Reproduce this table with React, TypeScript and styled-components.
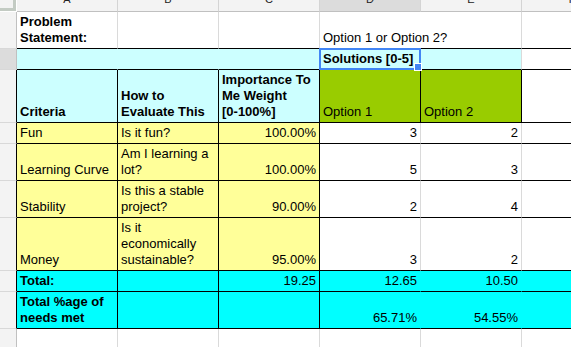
import React from 'react';
import styled, { createGlobalStyle } from 'styled-components';

const GRID = '#dadada';
const HEAD_LINE = '#c0c0c0';
const INK = '#000';
const PALE_CYAN = '#ccffff';
const YELLOW = '#ffff99';
const GREEN = '#99cc00';
const CYAN = '#00ffff';

const GlobalStyle = createGlobalStyle`
  html, body {
    margin: 0;
    padding: 0;
    background: #ffffff;
  }
`;

const Sheet = styled.div`
  width: 100vw;
  height: 100vh;
  overflow: hidden;
  background: #ffffff;
`;

const Grid = styled.div<{ $rows: string }>`
  display: grid;
  grid-template-columns: 17px repeat(6, 101px);
  grid-template-rows: ${p => p.$rows};
  font-family: 'Liberation Sans', Arial, sans-serif;
  font-size: 13px;
  line-height: 16px;
  color: #000;
`;

const Corner = styled.div`
  box-sizing: border-box;
  background: #f3f3f3;
  border-right: 3px solid #c3cbc3;
  border-bottom: 3px solid #c3cbc3;
  height: 11px;
  width: 16px;
`;

const ColumnHead = styled.div<{ $active?: boolean }>`
  box-sizing: border-box;
  display: flex;
  justify-content: center;
  align-items: flex-end;
  overflow: hidden;
  padding-bottom: 6px;
  background: ${p => (p.$active ? '#dcdcdc' : '#f3f3f3')};
  border-right: 1px solid #d4d4d4;
  border-bottom: 1px solid ${HEAD_LINE};
  font-size: 11px;
  line-height: 12px;
  color: #222;
`;

const RowHead = styled.div<{ $active?: boolean; $edge: string }>`
  box-sizing: border-box;
  background: ${p => (p.$active ? '#dcdcdc' : '#f3f3f3')};
  border-right: 1px solid ${p => p.$edge};
  border-bottom: 1px solid #d8d8d8;
`;

const Cell = styled.div<{
  $bg?: string;
  $bold?: boolean;
  $num?: boolean;
  $right: string;
  $bottom: string;
}>`
  box-sizing: border-box;
  display: flex;
  flex-direction: column;
  justify-content: flex-end;
  align-items: ${p => (p.$num ? 'flex-end' : 'flex-start')};
  padding: 0 3px 2px;
  overflow: hidden;
  background: ${p => p.$bg ?? 'transparent'};
  border-right: 1px solid ${p => p.$right};
  border-bottom: 1px solid ${p => p.$bottom};
  font-weight: ${p => (p.$bold ? 700 : 400)};
`;

// text that runs on into the empty neighbour cell
const SpillCell = styled(Cell)`
  overflow: visible;
  position: relative;
  z-index: 1;
`;

const Line = styled.span`
  display: block;
  white-space: nowrap;
`;

const Selection = styled.div`
  position: absolute;
  top: -1px;
  left: -1px;
  right: -1px;
  bottom: -1px;
  border: 2px solid #4285f4;
  pointer-events: none;
`;

const FillHandle = styled.div`
  position: absolute;
  right: -2px;
  bottom: -2px;
  width: 6px;
  height: 6px;
  background: #4285f4;
  box-shadow: 0 0 0 1px #ffffff;
`;

type CellSpec = {
  text?: string[];
  bg?: string;
  bold?: boolean;
  num?: boolean;
  right: string;
  spill?: boolean;
  selected?: boolean;
};

type RowSpec = {
  height: string;
  edge: string;
  active?: boolean;
  bottom: string;
  cells: CellSpec[];
};

const dataRow = (
  criteria: string,
  how: string[],
  weight: string,
  opt1: string,
  opt2: string
): RowSpec => ({
  height: `${16 * how.length + 5}px`,
  edge: INK,
  bottom: INK,
  cells: [
    { text: [criteria], bg: YELLOW, right: INK },
    { text: how, bg: YELLOW, right: INK },
    { text: [weight], bg: YELLOW, num: true, right: INK },
    { text: [opt1], num: true, right: GRID },
    { text: [opt2], num: true, right: GRID },
    { right: GRID },
  ],
});

const rows: RowSpec[] = [
  {
    height: '37px',
    edge: HEAD_LINE,
    bottom: INK,
    cells: [
      { text: ['Problem', 'Statement:'], bold: true, right: GRID },
      { right: GRID },
      { right: GRID },
      { text: ['Option 1 or Option 2?'], right: 'transparent', spill: true },
      { right: GRID },
      { right: GRID },
    ],
  },
  {
    height: '21px',
    edge: HEAD_LINE,
    active: true,
    bottom: INK,
    cells: [
      { bg: PALE_CYAN, right: PALE_CYAN },
      { bg: PALE_CYAN, right: PALE_CYAN },
      { bg: PALE_CYAN, right: PALE_CYAN },
      { text: ['Solutions [0-5]'], bold: true, bg: PALE_CYAN, right: PALE_CYAN, selected: true },
      { bg: PALE_CYAN, right: GRID },
      { right: GRID },
    ],
  },
  {
    height: '53px',
    edge: INK,
    bottom: INK,
    cells: [
      { text: ['Criteria'], bold: true, bg: PALE_CYAN, right: INK },
      { text: ['How to', 'Evaluate This'], bold: true, bg: PALE_CYAN, right: INK },
      { text: ['Importance To', 'Me Weight', '[0-100%]'], bold: true, bg: PALE_CYAN, right: INK },
      { text: ['Option 1'], bg: GREEN, right: INK },
      { text: ['Option 2'], bg: GREEN, right: INK },
      { right: GRID },
    ],
  },
  dataRow('Fun', ['Is it fun?'], '100.00%', '3', '2'),
  dataRow('Learning Curve', ['Am I learning a', 'lot?'], '100.00%', '5', '3'),
  dataRow('Stability', ['Is this a stable', 'project?'], '90.00%', '2', '4'),
  dataRow('Money', ['Is it', 'economically', 'sustainable?'], '95.00%', '3', '2'),
  {
    height: '21px',
    edge: INK,
    bottom: INK,
    cells: [
      { text: ['Total:'], bold: true, bg: CYAN, right: INK },
      { bg: CYAN, right: INK },
      { text: ['19.25'], num: true, bg: CYAN, right: INK },
      { text: ['12.65'], num: true, bg: CYAN, right: CYAN },
      { text: ['10.50'], num: true, bg: CYAN, right: CYAN },
      { bg: CYAN, right: CYAN },
    ],
  },
  {
    height: '37px',
    edge: INK,
    bottom: INK,
    cells: [
      { text: ['Total %age of', 'needs met'], bold: true, bg: CYAN, right: INK },
      { bg: CYAN, right: INK },
      { bg: CYAN, right: INK },
      { text: ['65.71%'], num: true, bg: CYAN, right: CYAN },
      { text: ['54.55%'], num: true, bg: CYAN, right: CYAN },
      { bg: CYAN, right: CYAN },
    ],
  },
  {
    height: '40px',
    edge: HEAD_LINE,
    bottom: GRID,
    cells: [
      { right: GRID },
      { right: GRID },
      { right: GRID },
      { right: GRID },
      { right: GRID },
      { right: GRID },
    ],
  },
];

const letters = ['A', 'B', 'C', 'D', 'E', 'F'];

const App: React.FC = () => {
  const template = ['12px', ...rows.map(r => r.height)].join(' ');

  return (
    <>
      <GlobalStyle />
      <Sheet>
        <Grid $rows={template}>
          <Corner />
          {letters.map(l => (
            <ColumnHead key={l} $active={l === 'D'}>
              {l}
            </ColumnHead>
          ))}

          {rows.map((row, r) => (
            <React.Fragment key={r}>
              <RowHead $active={row.active} $edge={row.edge} />
              {row.cells.map((c, i) => {
                const Box = c.spill || c.selected ? SpillCell : Cell;
                return (
                  <Box
                    key={i}
                    $bg={c.bg}
                    $bold={c.bold}
                    $num={c.num}
                    $right={c.right}
                    $bottom={row.bottom}
                  >
                    {c.text?.map((t, j) => <Line key={j}>{t}</Line>)}
                    {c.selected && (
                      <Selection>
                        <FillHandle />
                      </Selection>
                    )}
                  </Box>
                );
              })}
            </React.Fragment>
          ))}
        </Grid>
      </Sheet>
    </>
  );
};

export default App;
